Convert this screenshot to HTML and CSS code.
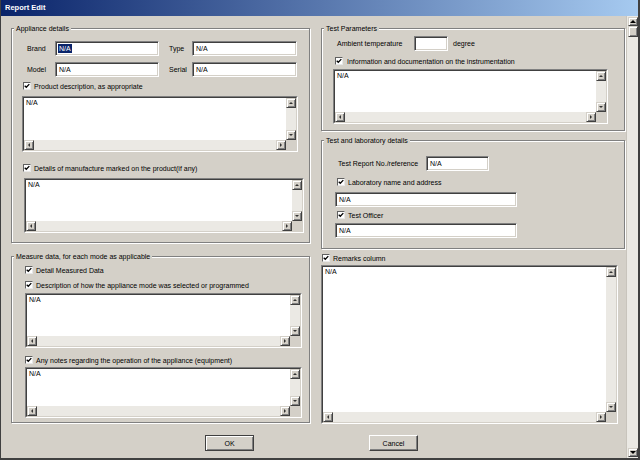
FILE: index.html
```html
<!DOCTYPE html>
<html>
<head>
<meta charset="utf-8">
<title>Report Edit</title>
<link rel="stylesheet" href="styles.css">
</head>
<body>
<div class="window">
  <div class="titlebar">Report Edit</div>
  <div class="client">
    <div class="main">
      <div class="cols">
        <div class="col col-left">
          <div class="group g-appliance">
            <div class="gtitle">Appliance details</div>
            <div class="pair-grid">
              <span class="lbl">Brand</span><div class="field"><span class="sel">N/A</span></div>
              <span class="lbl lbl2">Type</span><div class="field">N/A</div>
              <span class="lbl">Model</span><div class="field">N/A</div>
              <span class="lbl lbl2">Serial</span><div class="field">N/A</div>
            </div>
            <div class="chk c-prod"><span class="cb"><svg width="6" height="6" viewBox="0 0 6 6"><path d="M0.7 2.7 L2.3 4.3 L5.3 1.1" fill="none" stroke="#000" stroke-width="1.3"/></svg></span>Product description, as appropriate</div>
            <div class="ta ta-prod"><div class="ta-in">
              <div class="ta-text">N/A</div>
              <div class="sb-v"><span class="sbtn"><i class="arr up"></i></span><span class="trk"></span><span class="sbtn"><i class="arr dn"></i></span></div>
              <div class="sb-h"><span class="sbtn"><i class="arr lf"></i></span><span class="trk"></span><span class="sbtn"><i class="arr rt"></i></span></div>
              <div class="corner"></div>
            </div></div>
            <div class="chk c-manu"><span class="cb"><svg width="6" height="6" viewBox="0 0 6 6"><path d="M0.7 2.7 L2.3 4.3 L5.3 1.1" fill="none" stroke="#000" stroke-width="1.3"/></svg></span>Details of manufacture marked on the product(if any)</div>
            <div class="ta ta-manu"><div class="ta-in">
              <div class="ta-text">N/A</div>
              <div class="sb-v"><span class="sbtn"><i class="arr up"></i></span><span class="trk"></span><span class="sbtn"><i class="arr dn"></i></span></div>
              <div class="sb-h"><span class="sbtn"><i class="arr lf"></i></span><span class="trk"></span><span class="sbtn"><i class="arr rt"></i></span></div>
              <div class="corner"></div>
            </div></div>
          </div>
          <div class="group g-measure">
            <div class="gtitle">Measure data, for each mode as applicable</div>
            <div class="chk c-detail"><span class="cb"><svg width="6" height="6" viewBox="0 0 6 6"><path d="M0.7 2.7 L2.3 4.3 L5.3 1.1" fill="none" stroke="#000" stroke-width="1.3"/></svg></span>Detail Measured Data</div>
            <div class="chk c-desc"><span class="cb"><svg width="6" height="6" viewBox="0 0 6 6"><path d="M0.7 2.7 L2.3 4.3 L5.3 1.1" fill="none" stroke="#000" stroke-width="1.3"/></svg></span>Description of how the appliance mode was selected or programmed</div>
            <div class="ta ta-desc"><div class="ta-in">
              <div class="ta-text">N/A</div>
              <div class="sb-v"><span class="sbtn"><i class="arr up"></i></span><span class="trk"></span><span class="sbtn"><i class="arr dn"></i></span></div>
              <div class="sb-h"><span class="sbtn"><i class="arr lf"></i></span><span class="trk"></span><span class="sbtn"><i class="arr rt"></i></span></div>
              <div class="corner"></div>
            </div></div>
            <div class="chk c-notes"><span class="cb"><svg width="6" height="6" viewBox="0 0 6 6"><path d="M0.7 2.7 L2.3 4.3 L5.3 1.1" fill="none" stroke="#000" stroke-width="1.3"/></svg></span>Any notes regarding the operation of the appliance (equipment)</div>
            <div class="ta ta-notes"><div class="ta-in">
              <div class="ta-text">N/A</div>
              <div class="sb-v"><span class="sbtn"><i class="arr up"></i></span><span class="trk"></span><span class="sbtn"><i class="arr dn"></i></span></div>
              <div class="sb-h"><span class="sbtn"><i class="arr lf"></i></span><span class="trk"></span><span class="sbtn"><i class="arr rt"></i></span></div>
              <div class="corner"></div>
            </div></div>
          </div>
        </div>
        <div class="col col-right">
          <div class="group g-params">
            <div class="gtitle">Test Parameters</div>
            <div class="row r-amb">
              <span class="lbl l-amb">Ambient temperature</span>
              <div class="field f-amb"></div>
              <span class="unit">degree</span>
            </div>
            <div class="chk c-info"><span class="cb"><svg width="6" height="6" viewBox="0 0 6 6"><path d="M0.7 2.7 L2.3 4.3 L5.3 1.1" fill="none" stroke="#000" stroke-width="1.3"/></svg></span>Information and documentation on the instrumentation</div>
            <div class="ta ta-info"><div class="ta-in">
              <div class="ta-text">N/A</div>
              <div class="sb-v"><span class="sbtn"><i class="arr up"></i></span><span class="trk"></span><span class="sbtn"><i class="arr dn"></i></span></div>
              <div class="sb-h"><span class="sbtn"><i class="arr lf"></i></span><span class="trk"></span><span class="sbtn"><i class="arr rt"></i></span></div>
              <div class="corner"></div>
            </div></div>
          </div>
          <div class="group g-lab">
            <div class="gtitle">Test and laboratory details</div>
            <div class="row r-ref">
              <span class="lbl l-ref">Test Report No./reference</span>
              <div class="field f-ref">N/A</div>
            </div>
            <div class="chk c-lab"><span class="cb"><svg width="6" height="6" viewBox="0 0 6 6"><path d="M0.7 2.7 L2.3 4.3 L5.3 1.1" fill="none" stroke="#000" stroke-width="1.3"/></svg></span>Laboratory name and address</div>
            <div class="field f-wide f-lab">N/A</div>
            <div class="chk c-off"><span class="cb"><svg width="6" height="6" viewBox="0 0 6 6"><path d="M0.7 2.7 L2.3 4.3 L5.3 1.1" fill="none" stroke="#000" stroke-width="1.3"/></svg></span>Test Officer</div>
            <div class="field f-wide f-off">N/A</div>
          </div>
          <div class="chk c-rem"><span class="cb"><svg width="6" height="6" viewBox="0 0 6 6"><path d="M0.7 2.7 L2.3 4.3 L5.3 1.1" fill="none" stroke="#000" stroke-width="1.3"/></svg></span>Remarks column</div>
          <div class="ta ta-rem"><div class="ta-in">
            <div class="ta-text">N/A</div>
            <div class="sb-v"><span class="sbtn"><i class="arr up"></i></span><span class="trk"></span><span class="sbtn"><i class="arr dn"></i></span></div>
            <div class="sb-h"><span class="sbtn"><i class="arr lf"></i></span><span class="trk"></span><span class="sbtn"><i class="arr rt"></i></span></div>
            <div class="corner"></div>
          </div></div>
        </div>
      </div>
      <div class="buttons">
        <div class="btn btn-default">OK</div>
        <div class="btn">Cancel</div>
      </div>
    </div>
    <div class="vscroll">
      <span class="pbtn"><i class="parr pup"></i></span>
      <span class="thumb"></span>
      <span class="ptrk"></span>
      <span class="pbtn"><i class="parr pdn"></i></span>
    </div>
  </div>
</div>
</body>
</html>
```
FILE: styles.css
```css
* { box-sizing: border-box; }
html, body { margin: 0; padding: 0; }
body {
  width: 640px;
  height: 460px;
  overflow: hidden;
  background: #d4d0c8;
  font-family: "Liberation Sans", Arial, sans-serif;
  font-size: 7px;
  color: #000;
}
.window {
  width: 640px;
  height: 460px;
  display: flex;
  flex-direction: column;
  background: #d4d0c8;
  border-left: 1px solid #404040;
  border-right: 2px solid #404040;
  border-bottom: 2px solid #404040;
}
.titlebar {
  flex: none;
  height: 16px;
  line-height: 16px;
  padding-left: 4px;
  background: linear-gradient(to right, #0a246a, #a6caf0);
  color: #fff;
  font-weight: bold;
  font-size: 7.5px;
}
.client { flex: 1; display: flex; min-height: 0; }
.main {
  flex: 1;
  padding: 12px 1px 0 10px;
  display: flex;
  flex-direction: column;
}
.cols { display: flex; gap: 11px; align-items: flex-start; }
.col { display: flex; flex-direction: column; align-items: flex-start; }
.col-left { width: 299px; }
.col-right { width: 304px; }

/* group boxes */
.group {
  width: 100%;
  border: 1px solid #808080;
  box-shadow: inset 1px 1px 0 #fff, 1px 1px 0 #fff;
  display: flex;
  flex-direction: column;
  align-items: flex-start;
}
.gtitle {
  margin: -5px 0 0 2px;
  padding: 0 2px;
  height: 9px;
  line-height: 9px;
  background: #d4d0c8;
  white-space: nowrap;
}
.g-appliance { height: 215px; }
.g-measure { height: 167px; margin-top: 13px; }
.g-params { height: 103px; }
.g-lab { height: 109px; margin-top: 9px; }

/* labels + fields */
.lbl { line-height: 9px; white-space: nowrap; }
.pair-grid {
  margin: 8px 0 0 15px;
  display: grid;
  grid-template-columns: 28px 104px 33px 105px;
  grid-template-rows: 15px 15px;
  row-gap: 6px;
  align-items: center;
}
.lbl2 { padding-left: 10px; }
.field {
  height: 15px;
  background: #fff;
  border: 1px solid;
  border-color: #808080 #fff #fff #808080;
  box-shadow: inset 1px 1px 0 #404040, inset -1px -1px 0 #d4d0c8;
  padding-left: 3px;
  display: flex;
  align-items: center;
  line-height: 9px;
  white-space: nowrap;
}
.sel {
  background: #0a246a;
  color: #fff;
  padding: 0 1px;
  margin-left: -1px;
  line-height: 9px;
}
.row { display: flex; align-items: center; height: 15px; }
.r-amb { margin: 3px 0 0 15px; }
.l-amb { width: 77px; }
.f-amb { width: 34px; }
.unit { margin-left: 5px; line-height: 9px; }
.r-ref { margin: 11px 0 0 16px; }
.l-ref { width: 88px; }
.f-ref { width: 63px; }
.f-wide { width: 182px; margin-left: 13px; }
.f-lab { margin-top: 5px; }
.f-off { margin-top: 3px; }

/* checkboxes */
.chk {
  display: flex;
  align-items: center;
  gap: 3px;
  height: 10px;
  line-height: 9px;
  white-space: nowrap;
}
.cb {
  flex: none;
  width: 8px;
  height: 8px;
  background: #fff;
  border: 1px solid;
  border-color: #606060 #e8e8e8 #e8e8e8 #606060;
  display: flex;
  align-items: center;
  justify-content: center;
}
.cb svg { display: block; }
.c-prod { margin: 4px 0 0 11px; }
.c-manu { margin: 11px 0 0 11px; }
.c-detail { margin: 4px 0 0 13px; }
.c-desc { margin: 5px 0 0 13px; }
.c-notes { margin: 7px 0 0 13px; }
.c-info { margin: 5px 0 0 13px; gap: 4px; }
.c-lab { margin: 6px 0 0 15px; gap: 3px; }
.c-off { margin: 3px 0 0 15px; }
.c-rem { margin: 4px 0 0 1px; gap: 3px; }

/* multi-line text areas */
.ta {
  border: 1px solid;
  border-color: #808080 #fff #fff #808080;
}
.ta-in {
  height: 100%;
  border: 1px solid;
  border-color: #404040 #d4d0c8 #d4d0c8 #404040;
  display: grid;
  grid-template-columns: minmax(0, 1fr) 10px;
  grid-template-rows: minmax(0, 1fr) 10px;
}
.ta-text {
  background: #fff;
  padding: 0 2px;
  line-height: 9px;
}
.sb-v { display: flex; flex-direction: column; }
.sb-h { display: flex; }
.trk { flex: 1; background: #ebe9e4; }
.corner { background: #d4d0c8; }
.sbtn {
  flex: none;
  width: 10px;
  height: 10px;
  background: #d4d0c8;
  border: 1px solid;
  border-color: #d4d0c8 #404040 #404040 #d4d0c8;
  box-shadow: inset 1px 1px 0 #fff, inset -1px -1px 0 #808080;
  display: flex;
  align-items: center;
  justify-content: center;
}
.arr { display: block; width: 0; height: 0; }
.arr.up { border-left: 2px solid transparent; border-right: 2px solid transparent; border-bottom: 2px solid #333; }
.arr.dn { border-left: 2px solid transparent; border-right: 2px solid transparent; border-top: 2px solid #333; }
.arr.lf { border-top: 2px solid transparent; border-bottom: 2px solid transparent; border-right: 2px solid #333; }
.arr.rt { border-top: 2px solid transparent; border-bottom: 2px solid transparent; border-left: 2px solid #333; }

.ta-prod { margin: 5px 0 0 10px; width: 276px; height: 56px; }
.ta-manu { margin: 5px 0 0 12px; width: 280px; height: 55px; }
.ta-desc { margin: 3px 0 0 13px; width: 277px; height: 55px; }
.ta-notes { margin: 2px 0 0 13px; width: 277px; height: 51px; }
.ta-info { margin: 3px 0 0 11px; width: 275px; height: 55px; }
.ta-rem { margin: 2px 0 0 0; width: 297px; height: 159px; }

/* buttons */
.buttons { display: flex; gap: 115px; margin: 11px 0 0 194px; }
.btn {
  width: 49px;
  height: 16px;
  display: flex;
  align-items: center;
  justify-content: center;
  background: #d4d0c8;
  border: 1px solid;
  border-color: #fff #404040 #404040 #fff;
  box-shadow: inset -1px -1px 0 #808080;
  line-height: 9px;
}
.btn-default {
  border-color: #404040;
  box-shadow: inset 1px 1px 0 #fff, inset -1px -1px 0 #808080;
}

/* page scrollbar */
.vscroll {
  flex: none;
  width: 12px;
  padding: 1px 0 1px 1px;
  display: flex;
  flex-direction: column;
  background: #ebe9e4;
  border-left: 1px solid #c8c4bc;
}
.pbtn, .thumb {
  flex: none;
  width: 10px;
  background: #d4d0c8;
  border: 1px solid;
  border-color: #d4d0c8 #404040 #404040 #d4d0c8;
  box-shadow: inset 1px 1px 0 #fff, inset -1px -1px 0 #808080;
}
.pbtn { height: 9px; display: flex; align-items: center; justify-content: center; }
.thumb { height: 11px; }
.ptrk { flex: 1; }
.parr { display: block; width: 0; height: 0; }
.pup { border-left: 3px solid transparent; border-right: 3px solid transparent; border-bottom: 3px solid #000; }
.pdn { border-left: 3px solid transparent; border-right: 3px solid transparent; border-top: 3px solid #000; }
```
